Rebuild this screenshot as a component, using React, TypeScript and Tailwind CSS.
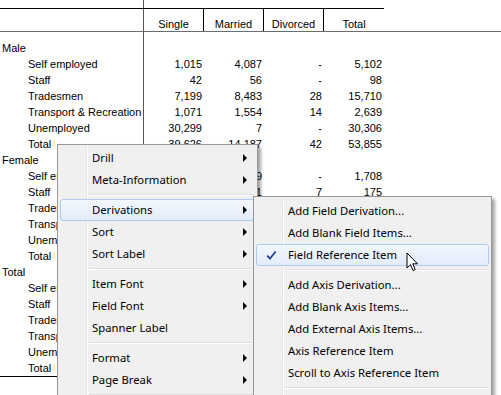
import React from 'react';

type Row = { label: string; level: 0 | 1; values?: string[] };

const rows: Row[] = [
  { label: 'Male', level: 0 },
  { label: 'Self employed', level: 1, values: ['1,015', '4,087', '-', '5,102'] },
  { label: 'Staff', level: 1, values: ['42', '56', '-', '98'] },
  { label: 'Tradesmen', level: 1, values: ['7,199', '8,483', '28', '15,710'] },
  { label: 'Transport & Recreation', level: 1, values: ['1,071', '1,554', '14', '2,639'] },
  { label: 'Unemployed', level: 1, values: ['30,299', '7', '-', '30,306'] },
  { label: 'Total', level: 1, values: ['39,626', '14,187', '42', '53,855'] },
  { label: 'Female', level: 0 },
  { label: 'Self employed', level: 1, values: ['1,219', '489', '-', '1,708'] },
  { label: 'Staff', level: 1, values: ['87', '81', '7', '175'] },
  { label: 'Tradesmen', level: 1, values: ['312', '406', '3', '721'] },
  { label: 'Transport & Recreation', level: 1, values: ['98', '120', '-', '218'] },
  { label: 'Unemployed', level: 1, values: ['9,845', '4', '-', '9,849'] },
  { label: 'Total', level: 1, values: ['11,561', '1,100', '10', '12,671'] },
  { label: 'Total', level: 0 },
  { label: 'Self employed', level: 1, values: ['2,234', '4,576', '-', '6,810'] },
  { label: 'Staff', level: 1, values: ['129', '137', '7', '273'] },
  { label: 'Tradesmen', level: 1, values: ['7,511', '8,889', '31', '16,431'] },
  { label: 'Transport & Recreation', level: 1, values: ['1,169', '1,674', '14', '2,857'] },
  { label: 'Unemployed', level: 1, values: ['40,144', '11', '-', '40,155'] },
  { label: 'Total', level: 1, values: ['51,187', '15,287', '52', '66,526'] },
];

type MenuItem = { label: string; arrow?: boolean; active?: boolean; checked?: boolean } | 'sep';

// menus run past the bottom of the window, only the visible part is listed
const mainMenu: MenuItem[] = [
  { label: 'Drill', arrow: true },
  { label: 'Meta-Information', arrow: true },
  'sep',
  { label: 'Derivations', arrow: true, active: true },
  { label: 'Sort', arrow: true },
  { label: 'Sort Label', arrow: true },
  'sep',
  { label: 'Item Font', arrow: true },
  { label: 'Field Font', arrow: true },
  { label: 'Spanner Label' },
  'sep',
  { label: 'Format', arrow: true },
  { label: 'Page Break', arrow: true },
  'sep',
];

const subMenu: MenuItem[] = [
  { label: 'Add Field Derivation...' },
  { label: 'Add Blank Field Items...' },
  { label: 'Field Reference Item', active: true, checked: true },
  'sep',
  { label: 'Add Axis Derivation...' },
  { label: 'Add Blank Axis Items...' },
  { label: 'Add External Axis Items...' },
  { label: 'Axis Reference Item' },
  { label: 'Scroll to Axis Reference Item' },
  'sep',
];

const CheckMark = () => (
  <svg width="11" height="11" viewBox="0 0 11 11">
    <path d="M1.2 5.6 L4 8.6 L9.6 1.4" fill="none" stroke="#1f3f8c" strokeWidth="1.7" />
  </svg>
);

const Menu = ({ items }: { items: MenuItem[] }) => (
  <div className="flex flex-col h-full">
    {items.map((item, i) => {
      if (item === 'sep') {
        return (
          <div key={i} className="flex h-[8px]">
            <div className="w-[27px] border-r border-[#e2e3e3]" />
            <div className="flex-1 border-l border-white flex flex-col justify-center pl-[1px]">
              <div className="h-[1px] bg-[#e0e0e0]" />
              <div className="h-[1px] bg-white" />
            </div>
          </div>
        );
      }
      if (item.active) {
        return (
          <div
            key={i}
            className="flex h-[22px] items-center rounded-[3px] border border-[#aeccf1] bg-gradient-to-b from-[#f3f7fd] to-[#e2ecfa]"
          >
            <div className="w-[26px] h-full flex items-center justify-center pl-[3px]">
              {item.checked && <CheckMark />}
            </div>
            <span className="ml-[5px] flex-1 whitespace-nowrap">{item.label}</span>
            {item.arrow && <span className="mr-[7px] h-0 w-0 border-y-[4px] border-l-[4px] border-y-transparent border-l-black" />}
          </div>
        );
      }
      return (
        <div key={i} className="flex h-[22px] items-center">
          <div className="w-[27px] h-full border-r border-[#e2e3e3]" />
          <span className="h-full border-l border-white" />
          <span className="ml-[4px] flex-1 whitespace-nowrap">{item.label}</span>
          {item.arrow && <span className="mr-[8px] h-0 w-0 border-y-[4px] border-l-[4px] border-y-transparent border-l-black" />}
        </div>
      );
    })}
    <div className="flex flex-1">
      <div className="w-[27px] border-r border-[#e2e3e3]" />
      <div className="flex-1 border-l border-white" />
    </div>
  </div>
);

export default function App() {
  return (
    <div className="relative w-[501px] h-[395px] overflow-hidden bg-white text-black" style={{ fontFamily: '"Liberation Sans", Arial, sans-serif' }}>
      {/* pivot table */}
      <div className="text-[11px] leading-[16px]">
        <div className="h-[8px] w-[144px] border-r border-[#555]" />
        <div className="flex h-[24px] border-b border-[#6d6d6d]">
          <div className="flex w-[384px] border-t border-black">
            <div className="w-[144px] border-r border-[#555]" />
            {['Single', 'Married', 'Divorced', 'Total'].map((h, i) => (
              <div
                key={h}
                className={`w-[60px] flex items-end justify-center leading-[14px] ${i < 3 ? 'border-r border-black' : ''}`}
              >
                {h}
              </div>
            ))}
          </div>
        </div>
        <div className="w-[384px] border-b border-black">
          <div className="h-[8px] w-[144px] border-r border-[#555]" />
          {rows.map((r, i) => (
            <div key={i} className="flex h-[16px]">
              <div className={`w-[144px] border-r border-[#555] whitespace-nowrap overflow-hidden ${r.level === 0 ? 'pl-[2px]' : 'pl-[28px]'}`}>
                {r.label}
              </div>
              {(r.values ?? ['', '', '', '']).map((v, j) => (
                <div key={j} className="w-[60px] text-right pr-[2px]">
                  {v}
                </div>
              ))}
            </div>
          ))}
        </div>
      </div>

      {/* context menu */}
      <div
        className="absolute left-[57px] top-[144px] w-[201px] h-[270px] border border-[#979797] bg-[#f0f0f0] p-[2px] text-[11.3px] shadow-[3px_3px_3px_rgba(0,0,0,0.35)]"
        style={{ fontFamily: '"Segoe UI", "Noto Sans", sans-serif' }}
      >
        <Menu items={mainMenu} />
      </div>

      {/* submenu */}
      <div
        className="absolute left-[253px] top-[196px] w-[239px] h-[220px] border border-[#979797] bg-[#f0f0f0] px-[2px] pt-[3px] text-[11.3px] shadow-[3px_3px_3px_rgba(0,0,0,0.35)]"
        style={{ fontFamily: '"Segoe UI", "Noto Sans", sans-serif' }}
      >
        <Menu items={subMenu} />
      </div>

      {/* mouse cursor */}
      <svg className="absolute left-[406px] top-[252px]" width="14" height="21" viewBox="0 0 14 21">
        <path d="M1 1 L1 16 L4.5 12.6 L7 18.5 L9.2 17.6 L6.8 11.8 L11.6 11.8 Z" fill="white" stroke="black" strokeWidth="1" strokeLinejoin="miter" />
      </svg>
    </div>
  );
}
